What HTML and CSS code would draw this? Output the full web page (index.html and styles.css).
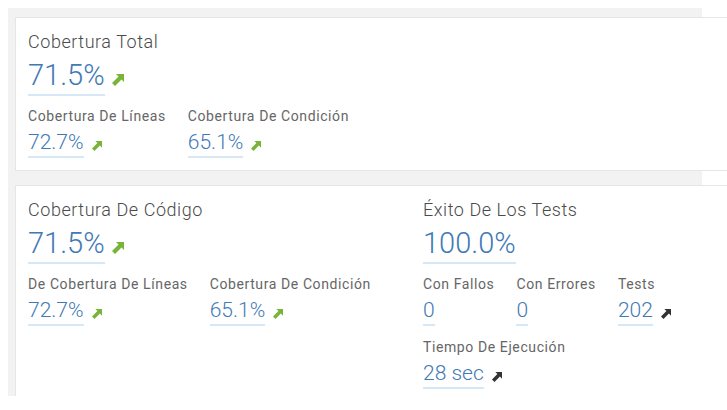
FILE: index.html
```html
<!DOCTYPE html>
<html lang="es">
<head>
<meta charset="utf-8">
<title>Cobertura</title>
<link rel="stylesheet" href="styles.css">
</head>
<body>
<div class="panel">
  <section class="card card-total">
    <div class="block">
      <div class="title">Cobertura Total</div>
      <div class="value"><span class="num">71.5%</span><svg class="arrow big green" viewBox="0 0 12 12"><path d="M4 0H12V8L9.5 5.5 3 12 0 9 6.5 2.5Z"/></svg></div>
      <div class="stats">
        <div class="stat">
          <div class="label">Cobertura De Líneas</div>
          <div class="subvalue"><span class="num">72.7%</span><svg class="arrow green" viewBox="0 0 12 12"><path d="M4 0H12V8L9.5 5.5 3 12 0 9 6.5 2.5Z"/></svg></div>
        </div>
        <div class="stat">
          <div class="label">Cobertura De Condición</div>
          <div class="subvalue"><span class="num">65.1%</span><svg class="arrow green" viewBox="0 0 12 12"><path d="M4 0H12V8L9.5 5.5 3 12 0 9 6.5 2.5Z"/></svg></div>
        </div>
      </div>
    </div>
  </section>
  <section class="card card-detail">
    <div class="block block-left">
      <div class="title">Cobertura De Código</div>
      <div class="value"><span class="num">71.5%</span><svg class="arrow big green" viewBox="0 0 12 12"><path d="M4 0H12V8L9.5 5.5 3 12 0 9 6.5 2.5Z"/></svg></div>
      <div class="stats">
        <div class="stat">
          <div class="label">De Cobertura De Líneas</div>
          <div class="subvalue"><span class="num">72.7%</span><svg class="arrow green" viewBox="0 0 12 12"><path d="M4 0H12V8L9.5 5.5 3 12 0 9 6.5 2.5Z"/></svg></div>
        </div>
        <div class="stat">
          <div class="label">Cobertura De Condición</div>
          <div class="subvalue"><span class="num">65.1%</span><svg class="arrow green" viewBox="0 0 12 12"><path d="M4 0H12V8L9.5 5.5 3 12 0 9 6.5 2.5Z"/></svg></div>
        </div>
      </div>
    </div>
    <div class="block block-right">
      <div class="title">Éxito De Los Tests</div>
      <div class="value"><span class="num">100.0%</span></div>
      <div class="stats">
        <div class="stat">
          <div class="label">Con Fallos</div>
          <div class="subvalue"><span class="num">0</span></div>
        </div>
        <div class="stat">
          <div class="label">Con Errores</div>
          <div class="subvalue"><span class="num">0</span></div>
        </div>
        <div class="stat">
          <div class="label">Tests</div>
          <div class="subvalue"><span class="num">202</span><svg class="arrow dark" viewBox="0 0 12 12"><path d="M4 0H12V8L9.5 5.5 3 12 0 9 6.5 2.5Z"/></svg></div>
        </div>
        <div class="stat">
          <div class="label">Tiempo De Ejecución</div>
          <div class="subvalue"><span class="num">28 sec</span><svg class="arrow dark" viewBox="0 0 12 12"><path d="M4 0H12V8L9.5 5.5 3 12 0 9 6.5 2.5Z"/></svg></div>
        </div>
      </div>
    </div>
  </section>
</div>
</body>
</html>
```
FILE: styles.css
```css
html, body {
  margin: 0;
  padding: 0;
  background: #ffffff;
  overflow: hidden;
}

body {
  font-family: Roboto, "Liberation Sans", Arial, sans-serif;
  color: #555555;
}

.panel {
  margin: 8px 0 0 8px;
  width: 694px;
  height: 388px;
  box-sizing: border-box;
  padding: 9px 0 0 7px;
  background: #f2f2f2;
}

.card {
  width: 740px;
  box-sizing: border-box;
  background: #ffffff;
  border: 1px solid #e6e6e6;
  padding: 13px 12px 0 12px;
}

.card-total {
  height: 154px;
}

.card-detail {
  margin-top: 14px;
  height: 220px;
  display: flex;
}

.block-left {
  width: 395px;
  flex: none;
}

.block-right {
  width: 290px;
  flex: none;
}

.title {
  font-size: 18px;
  line-height: 22px;
  font-weight: 300;
  letter-spacing: 0.55px;
  color: #4a4a4a;
}

.value {
  margin-top: 4px;
  font-size: 29px;
  line-height: 36px;
  font-weight: 300;
  color: #4179b5;
}

.num {
  display: inline-block;
  padding-bottom: 1px;
  border-bottom: 2px solid #d6e7f6;
}

.stats {
  margin-top: 12px;
  display: flex;
  flex-wrap: wrap;
  column-gap: 22px;
  row-gap: 13px;
}

.label {
  font-size: 14px;
  line-height: 17px;
  letter-spacing: 0.6px;
  color: #666666;
}

.subvalue {
  margin-top: 4px;
  font-size: 21px;
  line-height: 26px;
  font-weight: 300;
  color: #4179b5;
}

.arrow {
  width: 10px;
  height: 10px;
  margin-left: 8px;
  vertical-align: -2px;
}

.arrow.big {
  width: 12px;
  height: 12px;
  margin-left: 7px;
  vertical-align: -1px;
}

.green {
  fill: #79b43a;
}

.dark {
  fill: #333333;
}
```
